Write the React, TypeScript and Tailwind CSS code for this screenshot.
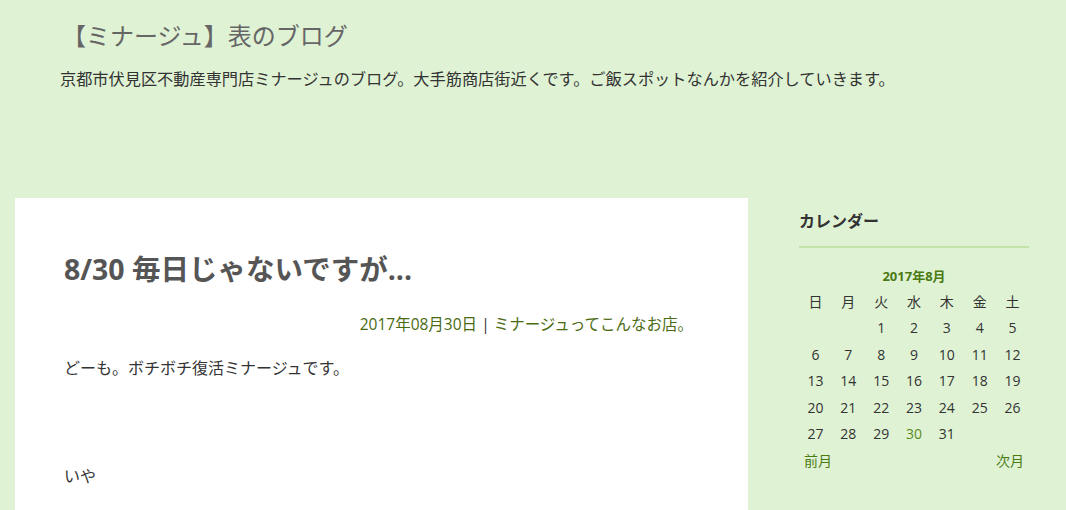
import React from 'react';

const font = { fontFamily: '"Open Sans", "Noto Sans CJK JP", sans-serif' };

const weeks: (number | null)[][] = [
  [null, null, 1, 2, 3, 4, 5],
  [6, 7, 8, 9, 10, 11, 12],
  [13, 14, 15, 16, 17, 18, 19],
  [20, 21, 22, 23, 24, 25, 26],
  [27, 28, 29, 30, 31, null, null],
];

const Calendar: React.FC = () => {
  return (
    <div className="w-[230px]">
      <h3 className="text-[16px] font-bold text-[#333] leading-none pt-[15px] pb-[17px] border-b-2 border-[#c3e3a9]">
        カレンダー
      </h3>
      <div className="text-center text-[13px] font-bold text-[#4a7a13] mt-[22px] leading-none">2017年8月</div>
      <div className="grid grid-cols-7 mt-[6px] text-[14px] text-[#333] text-center">
        {['日', '月', '火', '水', '木', '金', '土'].map((d) => (
          <div key={d} className="h-[26.4px] leading-[26.4px]">{d}</div>
        ))}
        {weeks.flat().map((d, i) => (
          <div key={i} className={`h-[26.4px] leading-[26.4px] ${d === 30 ? 'text-[#5a8a1f]' : ''}`}>
            {d ?? ''}
          </div>
        ))}
      </div>
      <div className="flex justify-between px-[5px] mt-[3px] text-[14px] text-[#4a7a13]">
        <span>前月</span>
        <span>次月</span>
      </div>
    </div>
  );
};

const App: React.FC = () => {
  return (
    <div className="w-[1066px] h-[510px] overflow-hidden bg-[#dff2d4]" style={font}>
      <header className="pl-[62px] pt-[20px] h-[198px]">
        <h1 className="text-[24px] text-[#666] leading-[32px]">【ミナージュ】表のブログ</h1>
        <p className="text-[16.2px] text-[#333] mt-[16px] -ml-[2px] leading-[22px]">
          京都市伏見区不動産専門店ミナージュのブログ。大手筋商店街近くです。ご飯スポットなんかを紹介していきます。
        </p>
      </header>
      <div className="flex pl-[15px]">
        <main className="w-[733px] h-[400px] bg-white pl-[49px] pr-[55px] pt-[53px]">
          <h2 className="text-[28.5px] font-bold text-[#555] leading-[36px]">8/30 毎日じゃないですが...</h2>
          <div className="text-right text-[15.5px] text-[#4a6b12] mt-[27px] leading-[20px]">
            2017年08月30日 <span className="text-[#333]">|</span> ミナージュってこんなお店。
          </div>
          <p className="text-[16px] text-[#333] mt-[22px] leading-[24px]">どーも。ボチボチ復活ミナージュです。</p>
          <p className="text-[16px] text-[#333] mt-[84px] leading-[24px]">いや</p>
        </main>
        <aside className="ml-[51px]">
          <Calendar />
        </aside>
      </div>
    </div>
  );
};

export default App;
